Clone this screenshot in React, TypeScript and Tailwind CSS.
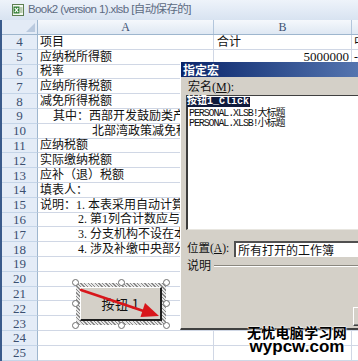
import React from 'react';

type Row = { n: number; a?: string; aClass?: string; b?: string; bRight?: boolean; c?: string };

const rows: Row[] = [
  { n: 4, a: '项目', b: '合计', c: '中' },
  { n: 5, a: '应纳税所得额', b: '5000000', bRight: true, c: '-' },
  { n: 6, a: '税率' },
  { n: 7, a: '应纳所得税额' },
  { n: 8, a: '减免所得税额' },
  { n: 9, a: '其中：西部开发鼓励类产业项目', aClass: 'pl-[15px]' },
  { n: 10, a: '北部湾政策减免税额', aClass: 'pl-[54px]' },
  { n: 11, a: '应纳税额' },
  { n: 12, a: '实际缴纳税额' },
  { n: 13, a: '应补（退）税额' },
  { n: 14, a: '填表人：' },
  { n: 15, a: '说明：1. 本表采用自动计算功能' },
  { n: 16, a: '2. 第1列合计数应与汇总数一致', aClass: 'pl-[40px]' },
  { n: 17, a: '3. 分支机构不设在本地区', aClass: 'pl-[40px]' },
  { n: 18, a: '4. 涉及补缴中央部分税款', aClass: 'pl-[40px]' },
  { n: 19 },
  { n: 20 },
  { n: 21 },
  { n: 22 },
  { n: 23 },
  { n: 24 },
  { n: 25 },
];

function ExcelIcon() {
  return (
    <svg width="12" height="12" viewBox="0 0 12 12">
      <rect x="0.5" y="0.5" width="11" height="11" fill="#f4f8f2" stroke="#5d7f52" />
      <rect x="1.5" y="2.5" width="6" height="7" fill="#2f7d32" />
      <path d="M2.8 3.8 L6.2 8.2 M6.2 3.8 L2.8 8.2" stroke="#fff" strokeWidth="1.2" />
      <path d="M8 4 H10.5 M8 6 H10.5 M8 8 H10.5" stroke="#7da06f" strokeWidth="1" />
    </svg>
  );
}

function Handle({ className }: { className: string }) {
  return <div className={`absolute w-[7px] h-[7px] rounded-full bg-white border border-[#6e6e6e] ${className}`} />;
}

function SheetButton() {
  return (
    <div className="absolute left-[75px] top-[282px] w-[92px] h-[44px]">
      <div className="absolute inset-[1px] bg-[repeating-linear-gradient(45deg,#8a8a8a_0_1px,#e6e6e6_1px_2.5px)]" />
      <div className="absolute left-[5px] top-[5px] right-[5px] bottom-[5px] bg-[#d4d0c8] border-t border-l border-t-white border-l-white border-r-2 border-b-2 border-r-[#1e1e1e] border-b-[#1e1e1e] flex items-center justify-center">
        <span className="text-[13px] leading-none text-[#111] font-['Noto_Sans_CJK_SC',sans-serif] tracking-[0.5px]">按钮 1</span>
      </div>
      <svg className="absolute left-0 top-0" width="92" height="44" viewBox="0 0 92 44">
        <line x1="6" y1="8" x2="70" y2="29.5" stroke="#d8161b" strokeWidth="2.6" strokeLinecap="round" />
        <polygon points="84,34 65.5,35 70,21" fill="#d8161b" />
      </svg>
      <Handle className="left-[-3px] top-[-3px]" />
      <Handle className="left-[43px] top-[-3px]" />
      <Handle className="right-[-3px] top-[-3px]" />
      <Handle className="left-[-3px] top-[18px]" />
      <Handle className="right-[-3px] top-[18px]" />
      <Handle className="left-[-3px] bottom-[-3px]" />
      <Handle className="left-[43px] bottom-[-3px]" />
      <Handle className="right-[-3px] bottom-[-3px]" />
    </div>
  );
}

function MacroDialog() {
  return (
    <div className="absolute left-[180px] top-[62px] w-[260px] h-[268px] bg-[#d4d0c8] border-l border-l-white border-b-2 border-b-[#404040] flex flex-col">
      <div className="h-[15px] shrink-0 bg-gradient-to-r from-[#0a246a] to-[#7b9bd0] flex items-center pl-[2px]">
        <span className="text-[12px] leading-none font-bold text-white font-['Noto_Sans_CJK_SC',sans-serif]">指定宏</span>
      </div>
      <div className="flex flex-col pl-[5px] font-['Liberation_Serif','Noto_Sans_CJK_SC',serif] text-[#111]">
        <div className="mt-[4px] h-[12px] flex items-center pl-[2px] text-[12px] leading-none">
          宏名(<span className="underline">M</span>):
        </div>
        <div className="mt-[2px] h-[12px] bg-white border-t border-l border-t-[#404040] border-l-[#404040] flex items-center">
          <span className="bg-[#0f1a3c] text-white h-[10px] flex items-center pr-[1px] text-[10px] leading-none font-bold font-['Liberation_Mono','Noto_Sans_CJK_SC',monospace]">
            按钮1_Click
          </span>
        </div>
        <div className="h-[123px] bg-white border-l-2 border-l-[#3c3c3c] border-b border-b-[#e8e6e0] pt-[2px] pl-[1px] flex flex-col">
          {['PERSONAL.XLSB!大标题', 'PERSONAL.XLSB!小标题'].map((t) => (
            <div key={t} className="h-[10px] leading-[10px] text-[10px] tracking-[-1.1px] text-[#111] whitespace-nowrap font-['Liberation_Mono','Noto_Sans_CJK_SC',monospace]">
              {t}
            </div>
          ))}
        </div>
        <div className="mt-[11px] h-[16px] flex items-center">
          <span className="w-[48px] shrink-0 pl-[1px] text-[11.5px] leading-none whitespace-nowrap">
            位置(<span className="underline">A</span>):
          </span>
          <div className="flex-1 h-[16px] bg-white border-t-2 border-l-2 border-t-[#505050] border-l-[#505050] flex items-center pl-[2px]">
            <span className="text-[12px] leading-none font-['Noto_Sans_CJK_SC',sans-serif]">所有打开的工作簿</span>
          </div>
        </div>
        <div className="mt-[3px] h-[12px] flex items-center">
          <span className="pl-[1px] text-[12px] leading-none">说明</span>
          <div className="flex-1 ml-[3px] border-t border-t-[#8a877f] border-b border-b-white" />
        </div>
        <div className="mt-[35px] ml-[167px] w-[70px] h-[19px] bg-[#d4d0c8] border-t border-l border-t-white border-l-white border-r border-b border-r-[#404040] border-b-[#404040] shadow-[inset_-1px_-1px_0_#808080]" />
      </div>
    </div>
  );
}

export default function App() {
  return (
    <div className="relative w-[358px] h-[361px] overflow-hidden bg-white font-['Liberation_Serif','Noto_Sans_CJK_SC',serif]">
      <div className="h-[20px] flex items-center pl-[12px] gap-[4px] bg-gradient-to-b from-[#eef3fa] to-[#d8e3f1]">
        <ExcelIcon />
        <span className="text-[11.5px] leading-none text-[#5d6b82] tracking-[-0.6px] font-['Liberation_Sans','Noto_Sans_CJK_SC',sans-serif] whitespace-nowrap">
          Book2 (version 1).xlsb [自动保存的]
        </span>
      </div>
      <div className="border-l-2 border-l-[#3a5b8c] flex flex-col">
        <div className="h-[15px] flex bg-gradient-to-b from-[#f5f8fc] to-[#dfe8f3] border-b border-b-[#9eb6ce]">
          <div className="w-[36px] relative border-r border-r-[#9eb6ce] bg-[#e3ebf6]">
            <div className="absolute right-[2px] bottom-[2px] w-0 h-0 border-l-[9px] border-l-transparent border-b-[9px] border-b-[#b9c9de]" />
          </div>
          <div className="w-[176px] border-r border-r-[#b3c6dc] flex items-center justify-center text-[12px] text-[#3e5272] leading-none">A</div>
          <div className="w-[138px] border-r border-r-[#b3c6dc] flex items-center justify-center text-[12px] text-[#3e5272] leading-none">B</div>
          <div className="flex-1" />
        </div>
        {rows.map((r) => (
          <div key={r.n} className="h-[14.8px] flex">
            <div className="w-[36px] shrink-0 bg-[#e4ecf7] border-r border-r-[#9eb6ce] border-b border-b-[#c5d5e8] flex items-center justify-center text-[13px] leading-none text-[#3b4f70]">
              {r.n}
            </div>
            <div className={`w-[176px] shrink-0 border-r border-b border-[#d0d7e5] flex items-center pl-[2px] text-[12px] leading-none text-[#111] whitespace-nowrap ${r.aClass ?? ''}`}>
              {r.a}
            </div>
            <div className={`w-[138px] shrink-0 border-r border-b border-[#d0d7e5] flex items-center text-[12px] leading-none text-[#111] whitespace-nowrap ${r.bRight ? 'justify-end pr-[2px] text-[13px]' : 'pl-[3px]'}`}>
              {r.b}
            </div>
            <div className="flex-1 border-b border-[#d0d7e5] flex items-center pl-[2px] text-[12px] leading-none text-[#111] whitespace-nowrap overflow-hidden">
              {r.c}
            </div>
          </div>
        ))}
      </div>
      <SheetButton />
      <MacroDialog />
      <div className="absolute left-[243px] top-[325px] w-[108px] flex flex-col items-center font-bold text-black [text-shadow:0_0_2px_#fff,0_0_2px_#fff,0_0_1px_#fff]">
        <span className="text-[14px] leading-[15px] tracking-[0.3px] font-['Noto_Sans_CJK_SC',sans-serif]">无忧电脑学习网</span>
        <span className="text-[17px] leading-[14px] font-['Liberation_Sans',sans-serif]">wypcw.com</span>
      </div>
    </div>
  );
}
